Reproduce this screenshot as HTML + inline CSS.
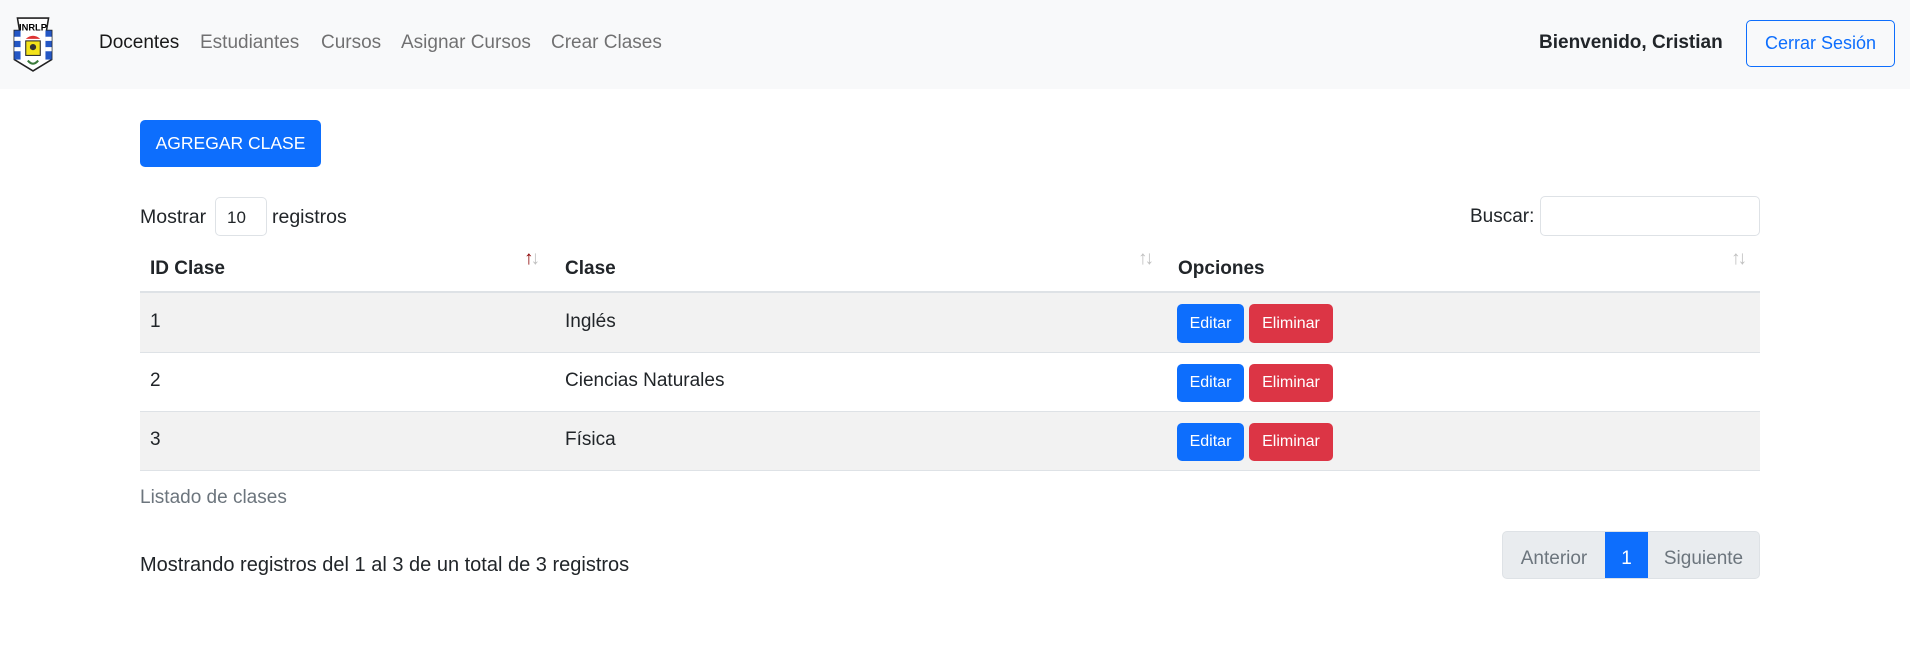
<!DOCTYPE html>
<html><head><meta charset="utf-8"><style>
*{box-sizing:border-box;margin:0;padding:0}
body{width:1910px;height:646px;background:#fff;font-family:"Liberation Sans",sans-serif;color:#212529;font-size:19px;position:relative;overflow:hidden}
.abs{position:absolute;white-space:nowrap}
nav{position:absolute;left:0;top:0;width:1910px;height:89px;background:#f8f9fa}
.nl{color:rgba(0,0,0,.55);font-size:19px;top:32px}
.btn{position:absolute;border-radius:5px;color:#fff;display:flex;align-items:center;justify-content:center}
.row{position:absolute;left:140px;width:1620px;border-bottom:1px solid #dee2e6}
.arr{position:absolute;font-size:19px;color:#c0c0c0;letter-spacing:-3px}
.pg{display:flex;align-items:center;justify-content:center;padding-top:8px}
</style></head><body>
<nav>
<svg class="abs" style="left:12px;top:16px" width="42" height="56" viewBox="0 0 40 54">
<path d="M5 2h30l-2 12h5v28l-18 11L2 42V14h5z" fill="#fff" stroke="#222" stroke-width="1.5"/>
<rect x="2" y="14" width="6" height="28" fill="#2457c5"/><rect x="32" y="14" width="6" height="28" fill="#2457c5"/>
<rect x="2" y="20" width="6" height="4" fill="#fff"/><rect x="32" y="20" width="6" height="4" fill="#fff"/>
<rect x="2" y="30" width="6" height="4" fill="#fff"/><rect x="32" y="30" width="6" height="4" fill="#fff"/>
<text x="20" y="14" font-size="9" font-weight="bold" text-anchor="middle" font-family="Liberation Sans">INRLP</text>
<path d="M13 22q7-6 14 0z" fill="#d33"/>
<rect x="13" y="24" width="14" height="14" fill="#f3e21a" stroke="#222"/>
<circle cx="20" cy="30" r="3" fill="#333"/><path d="M15 43q5 6 10 0" stroke="#3a7a3a" stroke-width="2" fill="none"/>
</svg>
<span class="abs nl" style="left:99px;color:rgba(0,0,0,.9)">Docentes</span>
<span class="abs nl" style="left:200px">Estudiantes</span>
<span class="abs nl" style="left:321px">Cursos</span>
<span class="abs nl" style="left:401px">Asignar Cursos</span>
<span class="abs nl" style="left:551px">Crear Clases</span>
<span class="abs" style="left:1539px;top:32px;font-weight:bold;font-size:19px">Bienvenido, Cristian</span>
<div class="btn" style="left:1746px;top:20px;width:149px;height:47px;border:1px solid #0d6efd;color:#0d6efd;font-size:18px">Cerrar Sesión</div>
</nav>
<div class="btn" style="left:140px;top:120px;width:181px;height:47px;background:#0d6efd;font-size:17.5px">AGREGAR CLASE</div>
<span class="abs" style="left:140px;top:206px;font-size:19.5px">Mostrar</span>
<div class="abs" style="left:215px;top:197px;width:52px;height:39px;border:1px solid #dee2e6;border-radius:5px;padding:10px 11px;font-size:17px">10</div>
<span class="abs" style="left:272px;top:206px;font-size:19.5px">registros</span>
<span class="abs" style="left:1470px;top:206px">Buscar:</span>
<div class="abs" style="left:1540px;top:196px;width:220px;height:40px;border:1px solid #dee2e6;border-radius:5px"></div>
<div class="row" style="top:244px;height:49px;border-bottom:2px solid #dee2e6"></div>
<span class="abs" style="left:150px;top:258px;font-weight:bold">ID Clase</span>
<span class="abs" style="left:565px;top:258px;font-weight:bold">Clase</span>
<span class="abs" style="left:1178px;top:258px;font-weight:bold">Opciones</span>
<span class="arr" style="left:524px;top:248px"><span style="color:#8b0000">↑</span>↓</span>
<span class="arr" style="left:1138px;top:248px">↑↓</span>
<span class="arr" style="left:1731px;top:248px">↑↓</span>
<div class="row" style="top:293px;height:60px;background:#f2f2f2"></div>
<div class="row" style="top:353px;height:59px"></div>
<div class="row" style="top:412px;height:59px;background:#f2f2f2"></div>
<span class="abs" style="left:150px;top:311px">1</span><span class="abs" style="left:565px;top:311px">Inglés</span>
<span class="abs" style="left:150px;top:370px">2</span><span class="abs" style="left:565px;top:370px">Ciencias Naturales</span>
<span class="abs" style="left:150px;top:429px">3</span><span class="abs" style="left:565px;top:429px">Física</span>
<div class="btn" style="left:1177px;top:304px;width:67px;height:39px;background:#0d6efd;font-size:16px">Editar</div>
<div class="btn" style="left:1249px;top:304px;width:84px;height:39px;background:#dc3545;font-size:16px">Eliminar</div>
<div class="btn" style="left:1177px;top:364px;width:67px;height:38px;background:#0d6efd;font-size:16px">Editar</div>
<div class="btn" style="left:1249px;top:364px;width:84px;height:38px;background:#dc3545;font-size:16px">Eliminar</div>
<div class="btn" style="left:1177px;top:423px;width:67px;height:38px;background:#0d6efd;font-size:16px">Editar</div>
<div class="btn" style="left:1249px;top:423px;width:84px;height:38px;background:#dc3545;font-size:16px">Eliminar</div>
<span class="abs" style="left:140px;top:487px;color:#6c757d">Listado de clases</span>
<span class="abs" style="left:140px;top:554px;font-size:20px">Mostrando registros del 1 al 3 de un total de 3 registros</span>
<div class="abs" style="left:1502px;top:531px;width:258px;height:48px;border:1px solid #dee2e6;border-radius:5px;background:#e9ecef;display:flex">
<div class="pg" style="width:102px;color:#6c757d">Anterior</div>
<div class="pg" style="width:43px;background:#0d6efd;color:#fff">1</div>
<div class="pg" style="flex:1;color:#6c757d">Siguiente</div>
</div>
</body></html>
